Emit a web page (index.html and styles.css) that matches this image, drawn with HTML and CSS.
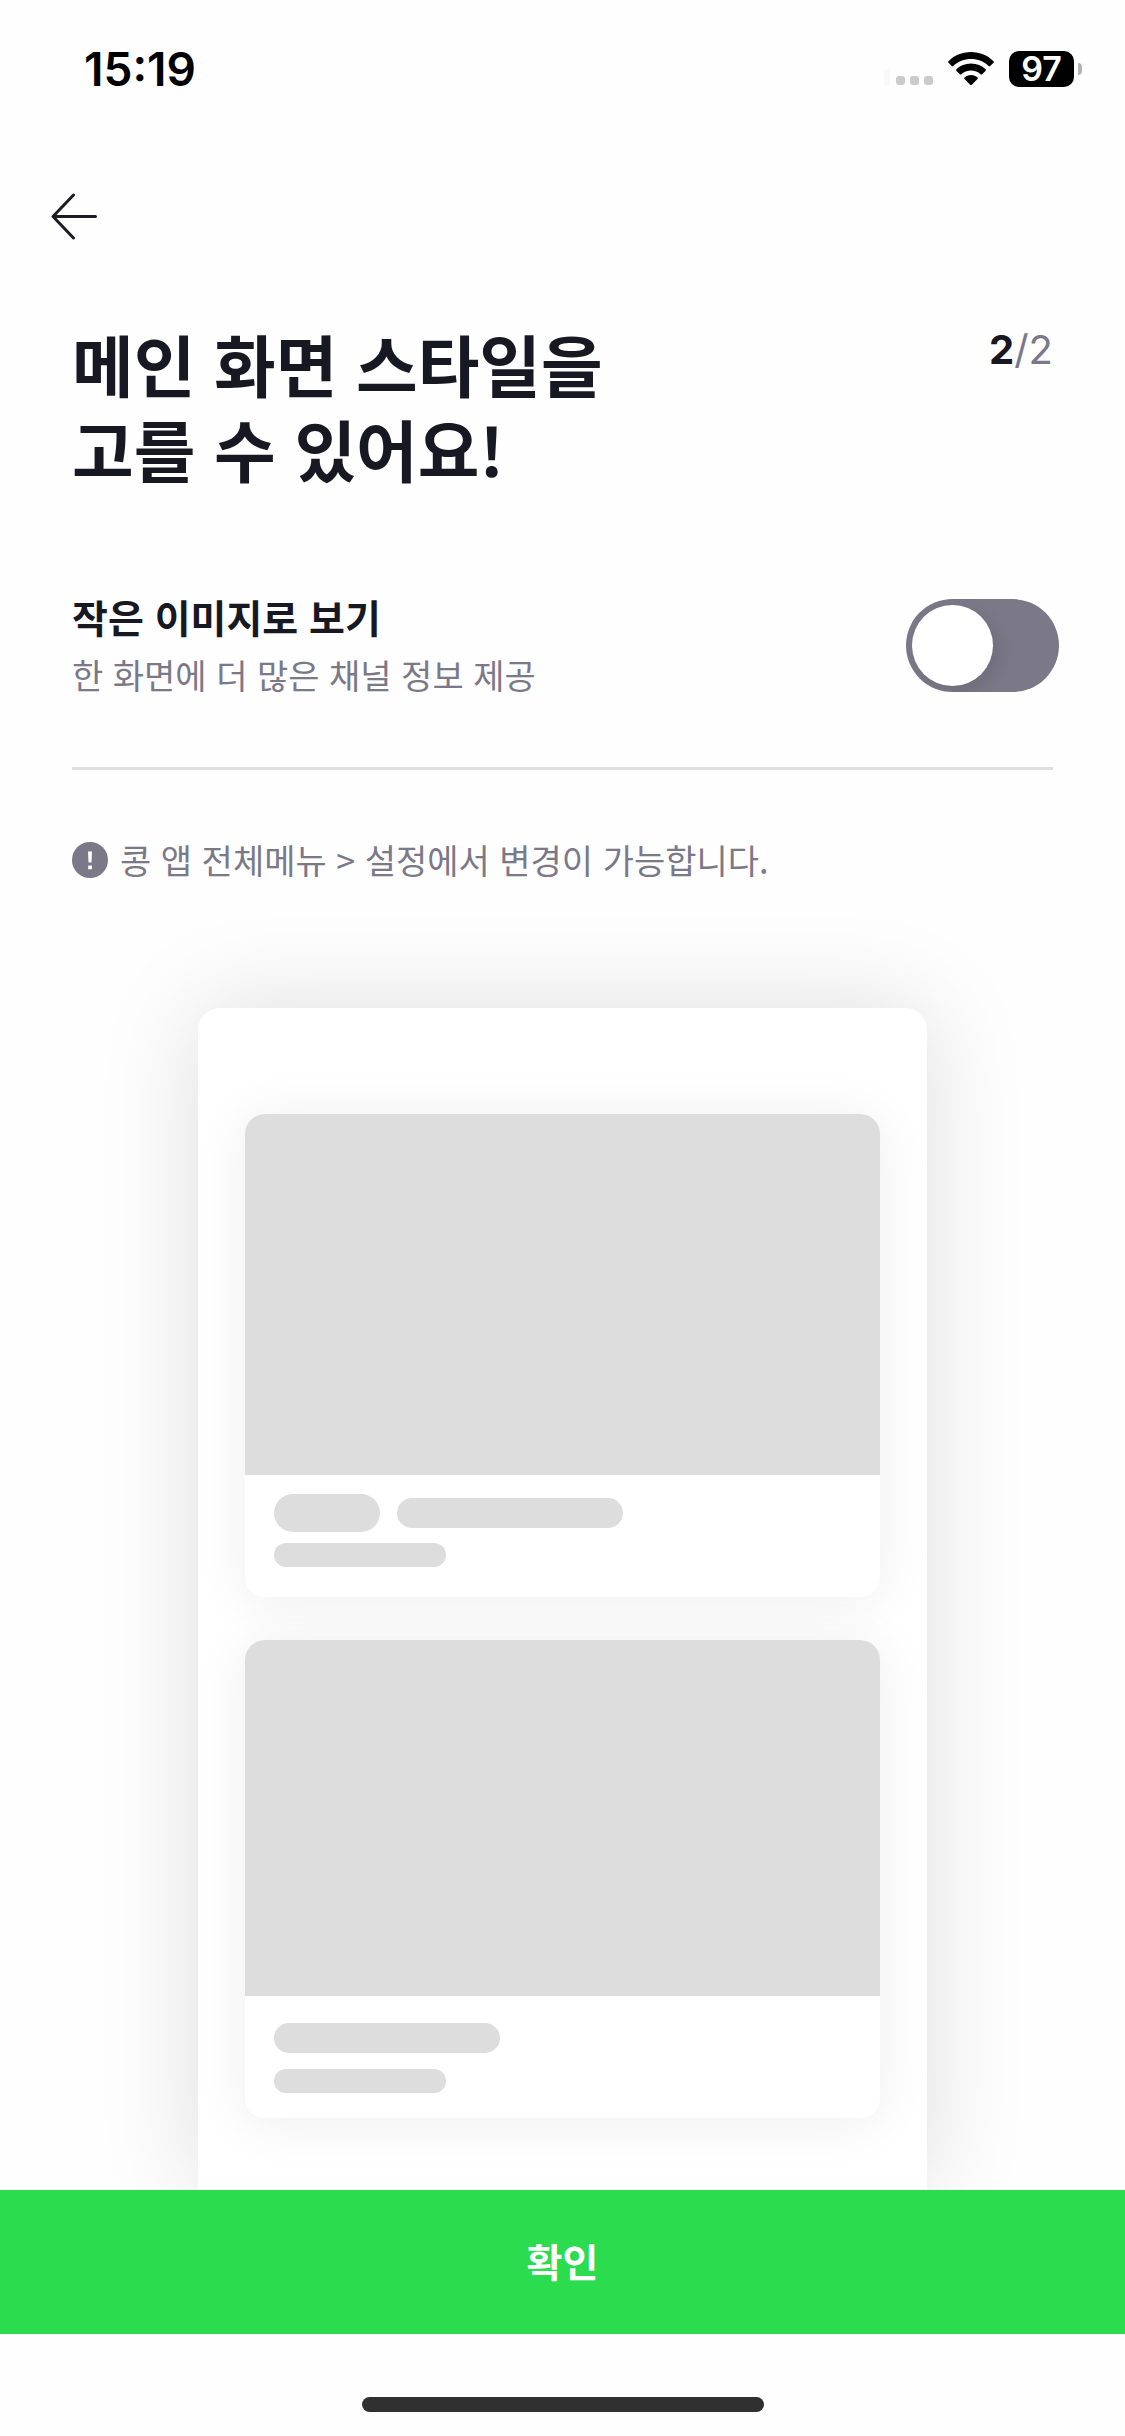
FILE: index.html
```html
<!DOCTYPE html>
<html lang="ko">
<head>
<meta charset="utf-8">
<meta name="viewport" content="width=device-width, initial-scale=1">
<title>메인 화면 스타일</title>
<link rel="stylesheet" href="styles.css">
</head>
<body>
<div class="screen">
  <header class="status">
    <span class="status-time">15:19</span>
    <div class="status-icons">
      <svg class="signal" width="52" height="36" viewBox="0 0 52 36" aria-hidden="true">
        <rect x="2" y="18" width="6" height="17" fill="#f9f9f9"/>
        <rect x="14" y="25" width="9" height="9" rx="3" fill="#cbcbcb"/>
        <rect x="28" y="25" width="9" height="9" rx="3" fill="#cbcbcb"/>
        <rect x="42" y="25" width="9" height="9" rx="3" fill="#cbcbcb"/>
      </svg>
      <svg width="46" height="34" viewBox="0 0 46 34" aria-hidden="true">
        <path d="M23 0C32 0 40 3.500 45.500 9.200Q46.200 10 45.500 10.800L42.200 14.100Q41.400 14.700 40.600 14C35.900 9.500 29.800 7.100 23 7.100S10.100 9.500 5.400 14Q4.600 14.700 3.800 14.100L.5 10.800Q-.2 10 .5 9.200C6 3.500 14 0 23 0Z"/>
        <path d="M23 11.500C28.800 11.500 33.900 13.700 37.600 17.300Q38.300 18.100 37.500 18.900L34.100 22.200Q33.300 22.800 32.500 22.200C29.900 19.900 26.600 18.600 23 18.600S16.100 19.900 13.500 22.200Q12.700 22.800 11.900 22.200L8.500 18.900Q7.700 18.100 8.400 17.300C12.100 13.700 17.200 11.500 23 11.500Z"/>
        <path d="M23 23C25.600 23 27.900 23.900 29.500 25.400Q30.200 26.200 29.500 27L23.800 32.700Q23 33.400 22.200 32.700L16.500 27Q15.800 26.200 16.500 25.400C18.100 23.900 20.400 23 23 23Z"/>
      </svg>
      <div class="battery"><span class="battery-level">97</span><span class="battery-tip"></span></div>
    </div>
  </header>

  <nav class="topbar">
    <button class="back" type="button" aria-label="뒤로">
      <svg width="48" height="48" viewBox="0 0 48 48" fill="none" stroke="#1c1c22" stroke-width="3" stroke-linecap="round" stroke-linejoin="round" aria-hidden="true"><path d="M45.500 24.500H3M23.500 3L3 24.500L23.500 46"/></svg>
    </button>
  </nav>

  <main class="content">
    <div class="heading">
      <h1 class="title">메인 화면 스타일을<br>고를 수 있어요!</h1>
      <p class="step"><b class="step-now">2</b>/2</p>
    </div>

    <div class="option">
      <label class="option-text" for="small-images">
        <span class="option-name">작은 이미지로 보기</span>
        <span class="option-desc">한 화면에 더 많은 채널 정보 제공</span>
      </label>
      <input class="switch" type="checkbox" role="switch" id="small-images">
    </div>

    <p class="note">
      <svg width="36" height="36" viewBox="0 0 36 36" aria-hidden="true"><circle cx="18" cy="18" r="18" fill="#7b7888"/><path d="M16 9.500h4l-.5 11h-3zM16.200 23.500h3.700v3.700h-3.700z" fill="#fefefe"/></svg>
      <span>콩 앱 전체메뉴 &gt; 설정에서 변경이 가능합니다.</span>
    </p>

    <div class="preview">
      <div class="card">
        <div class="card-image"></div>
        <div class="card-body">
          <div class="card-row"><span class="bar bar-badge"></span><span class="bar bar-title"></span></div>
          <span class="bar bar-sub"></span>
        </div>
      </div>
      <div class="card">
        <div class="card-image"></div>
        <div class="card-body card-body-plain">
          <span class="bar bar-title"></span>
          <span class="bar bar-sub"></span>
        </div>
      </div>
    </div>
  </main>

  <footer class="footer">
    <button class="confirm" type="button">확인</button>
    <div class="home"><span class="home-bar"></span></div>
  </footer>
</div>
</body>
</html>
```
FILE: styles.css
```css
* {
  box-sizing: border-box;
  margin: 0;
  padding: 0;
}

body {
  background: #fefefe;
  color: #181822;
  font-family: "Noto Sans CJK KR", sans-serif;
}

button {
  border: 0;
  background: none;
  font: inherit;
  cursor: pointer;
}

.screen {
  display: flex;
  flex-direction: column;
  height: 100vh;
  overflow: hidden;
}

/* Status bar */
.status {
  display: flex;
  justify-content: space-between;
  align-items: center;
  height: 138px;
  padding: 0 43px 0 84px;
  color: #000;
  font-family: Inter, sans-serif;
  font-weight: 600;
}

.status-time {
  font-size: 46px;
}

.status-icons {
  display: flex;
  align-items: center;
  gap: 15px;
}

.battery {
  display: flex;
  align-items: center;
  gap: 4px;
}

.battery-level {
  width: 65px;
  border-radius: 10px;
  background: #000;
  color: #fff;
  font-size: 34px;
  line-height: 36px;
  text-align: center;
}

.battery-tip {
  width: 4px;
  height: 12px;
  border-radius: 0 4px 4px 0;
  background: #b4b4b4;
}

.signal {
  margin-right: -1px;
}

/* Top bar */
.topbar {
  display: flex;
  align-items: center;
  height: 156px;
  padding: 0 50px;
}

.back {
  display: flex;
}

/* Content */
.content {
  display: flex;
  flex: 1;
  flex-direction: column;
  min-height: 0;
  padding: 26px 72px 0;
  overflow: hidden;
}

.heading {
  display: flex;
  justify-content: space-between;
}

.title {
  font-size: 67px;
  font-weight: 700;
  line-height: 85px;
}

.step {
  color: #7b7888;
  font-family: Inter, sans-serif;
  font-size: 40px;
  line-height: 60px;
}

.step-now {
  color: #181822;
}

.option {
  display: flex;
  justify-content: space-between;
  align-items: center;
  margin-top: 96px;
  padding-bottom: 63px;
  border-bottom: 3px solid #dedfdf;
}

.option-text {
  display: flex;
  flex-direction: column;
}

.option-name {
  font-size: 39px;
  font-weight: 700;
  line-height: 60px;
}

.option-desc {
  color: #7b7888;
  font-size: 34px;
  line-height: 58px;
}

.switch {
  flex: none;
  width: 153px;
  height: 93px;
  margin-right: -6px;
  padding: 6px;
  border-radius: 47px;
  background: #7b7888;
  overflow: hidden;
  appearance: none;
  cursor: pointer;
}

.switch::before {
  display: block;
  width: 81px;
  height: 81px;
  border-radius: 50%;
  background: #fff;
  box-shadow: 6px 6px 18px rgba(0, 0, 0, 0.1);
  content: "";
}

.switch:checked::before {
  margin-left: auto;
}

.note {
  display: flex;
  align-items: center;
  gap: 12px;
  margin-top: 64px;
  color: #7b7888;
  font-size: 34px;
  line-height: 52px;
}

/* Mock of the main screen, cut off by the footer */
.preview {
  display: flex;
  flex: 1 0 auto;
  flex-direction: column;
  gap: 43px;
  width: 100%;
  max-width: 729px;
  margin: 122px auto 0;
  padding: 106px 47px 71px;
  border-radius: 22px 22px 0 0;
  background: #fff;
  box-shadow: 0 0 100px rgba(0, 0, 0, 0.13);
}

.card {
  border-radius: 20px;
  background: #fff;
  box-shadow: 0 4px 54px rgba(0, 0, 0, 0.07);
}

.card-image {
  height: 361px;
  border-radius: 20px 20px 0 0;
  background: #ddd;
}

.card + .card .card-image {
  height: 356px;
}

.card-body {
  display: flex;
  flex-direction: column;
  gap: 11px;
  height: 122px;
  padding: 19px 29px;
}

.card-body-plain {
  gap: 16px;
  padding-top: 27px;
}

.card-row {
  display: flex;
  align-items: center;
  gap: 17px;
}

.bar {
  border-radius: 19px;
  background: #ddd;
}

.bar-badge {
  width: 106px;
  height: 38px;
}

.bar-title {
  width: 226px;
  height: 30px;
}

.bar-sub {
  width: 172px;
  height: 24px;
}

/* Footer */
.footer {
  position: relative;
  background: #fefefe;
}

.confirm {
  width: 100%;
  height: 144px;
  padding-bottom: 4px;
  background: #2bdc4f;
  color: #fff;
  font-size: 39px;
  font-weight: 700;
}

.home {
  display: flex;
  justify-content: center;
  padding: 63px 0 24px;
}

.home-bar {
  width: 402px;
  height: 15px;
  border-radius: 8px;
  background: #303030;
}
```
